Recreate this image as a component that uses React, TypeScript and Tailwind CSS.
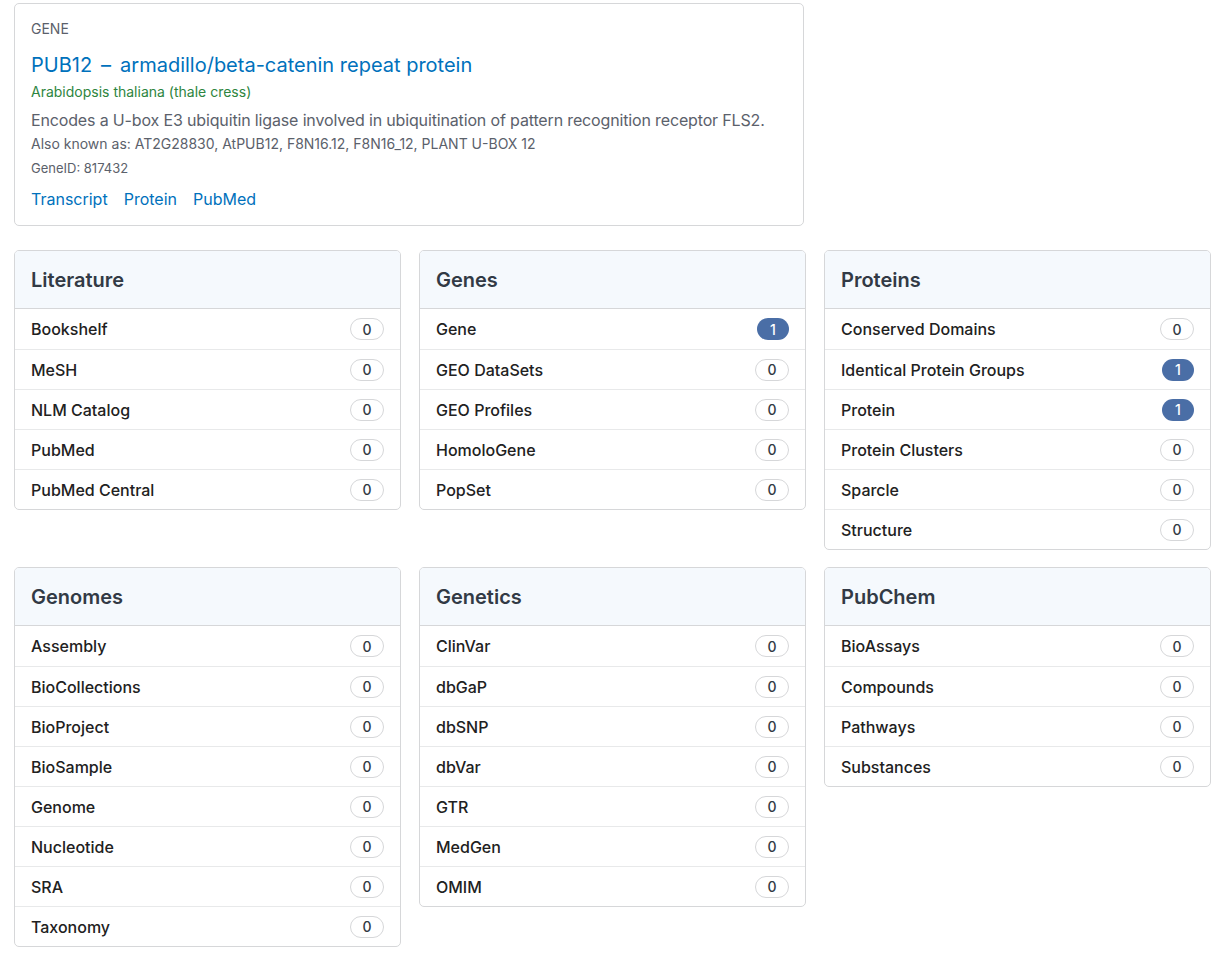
import React from 'react';

type Row = { label: string; count: number };
type Panel = { title: string; rows: Row[] };

const r = (label: string, count = 0): Row => ({ label, count });

const panels: Panel[] = [
    { title: 'Literature', rows: [r('Bookshelf'), r('MeSH'), r('NLM Catalog'), r('PubMed'), r('PubMed Central')] },
    { title: 'Genes', rows: [r('Gene', 1), r('GEO DataSets'), r('GEO Profiles'), r('HomoloGene'), r('PopSet')] },
    {
        title: 'Proteins',
        rows: [
            r('Conserved Domains'),
            r('Identical Protein Groups', 1),
            r('Protein', 1),
            r('Protein Clusters'),
            r('Sparcle'),
            r('Structure'),
        ],
    },
    {
        title: 'Genomes',
        rows: [
            r('Assembly'),
            r('BioCollections'),
            r('BioProject'),
            r('BioSample'),
            r('Genome'),
            r('Nucleotide'),
            r('SRA'),
            r('Taxonomy'),
        ],
    },
    {
        title: 'Genetics',
        rows: [r('ClinVar'), r('dbGaP'), r('dbSNP'), r('dbVar'), r('GTR'), r('MedGen'), r('OMIM')],
    },
    { title: 'PubChem', rows: [r('BioAssays'), r('Compounds'), r('Pathways'), r('Substances')] },
];

const Badge: React.FC<{ count: number }> = ({ count }) =>
    count > 0 ? (
        <span className="inline-flex items-center justify-center w-[32px] h-[22px] rounded-full bg-[#4a6ea6] text-white text-[14px] font-medium">
            {count}
        </span>
    ) : (
        <span className="inline-flex items-center justify-center w-[34px] h-[22px] rounded-full border border-[#d6d7d9] bg-white text-[#323a45] text-[14px] font-medium">
            {count}
        </span>
    );

const App: React.FC = () => {
    return (
        <div className="bg-white min-h-[965px] pl-[14px] pr-[16px] pt-[3px] font-['Inter','Liberation_Sans',sans-serif]">
            {/* Gene summary */}
            <div className="w-[790px] border border-[#d6d7d9] rounded-[5px] px-4 pt-[16px] pb-[15px]">
                <p className="text-[14px] leading-[18px] text-[#5b616b]">GENE</p>
                <h1 className="mt-[14px] text-[20px] leading-[26px] text-[#0071bc]">
                    <span>PUB12</span>
                    <span className="mx-[9px]">–</span>
                    <span>armadillo/beta-catenin repeat protein</span>
                </h1>
                <p className="mt-[5px] text-[14px] leading-[18px] text-[#2e8540]">Arabidopsis thaliana (thale cress)</p>
                <p className="mt-[8px] text-[16px] leading-[22px] tracking-[-0.15px] text-[#5b616b]">
                    Encodes a U-box E3 ubiquitin ligase involved in ubiquitination of pattern recognition receptor FLS2.
                </p>
                <p className="mt-[4px] text-[14px] leading-[18px] text-[#5b616b]">
                    Also known as: AT2G28830, AtPUB12, F8N16.12, F8N16_12, PLANT U-BOX 12
                </p>
                <p className="mt-[6px] text-[13px] leading-[18px] text-[#5b616b]">GeneID: 817432</p>
                <div className="mt-[11px] flex gap-[16px] text-[16px] leading-[22px] text-[#0071bc]">
                    <a>Transcript</a>
                    <a>Protein</a>
                    <a>PubMed</a>
                </div>
            </div>

            {/* Database panels */}
            <div className="mt-[24px] grid grid-cols-3 gap-x-[18px] gap-y-[17px] items-start">
                {panels.map((panel) => (
                    <div key={panel.title} className="border border-[#d6d7d9] rounded-[5px] overflow-hidden">
                        <div className="h-[58px] flex items-center px-4 bg-[#f5f9fd] border-b border-[#d6d7d9]">
                            <h2 className="text-[20px] font-semibold text-[#323a45]">{panel.title}</h2>
                        </div>
                        {panel.rows.map((row, i) => (
                            <div
                                key={row.label}
                                className={`h-[40px] flex items-center justify-between pl-4 pr-[16px] ${
                                    i > 0 ? 'border-t border-[#e8e9ea]' : ''
                                }`}
                            >
                                <span className="text-[16px] font-medium text-[#212121]">{row.label}</span>
                                <Badge count={row.count} />
                            </div>
                        ))}
                    </div>
                ))}
            </div>
        </div>
    );
};

export default App;
